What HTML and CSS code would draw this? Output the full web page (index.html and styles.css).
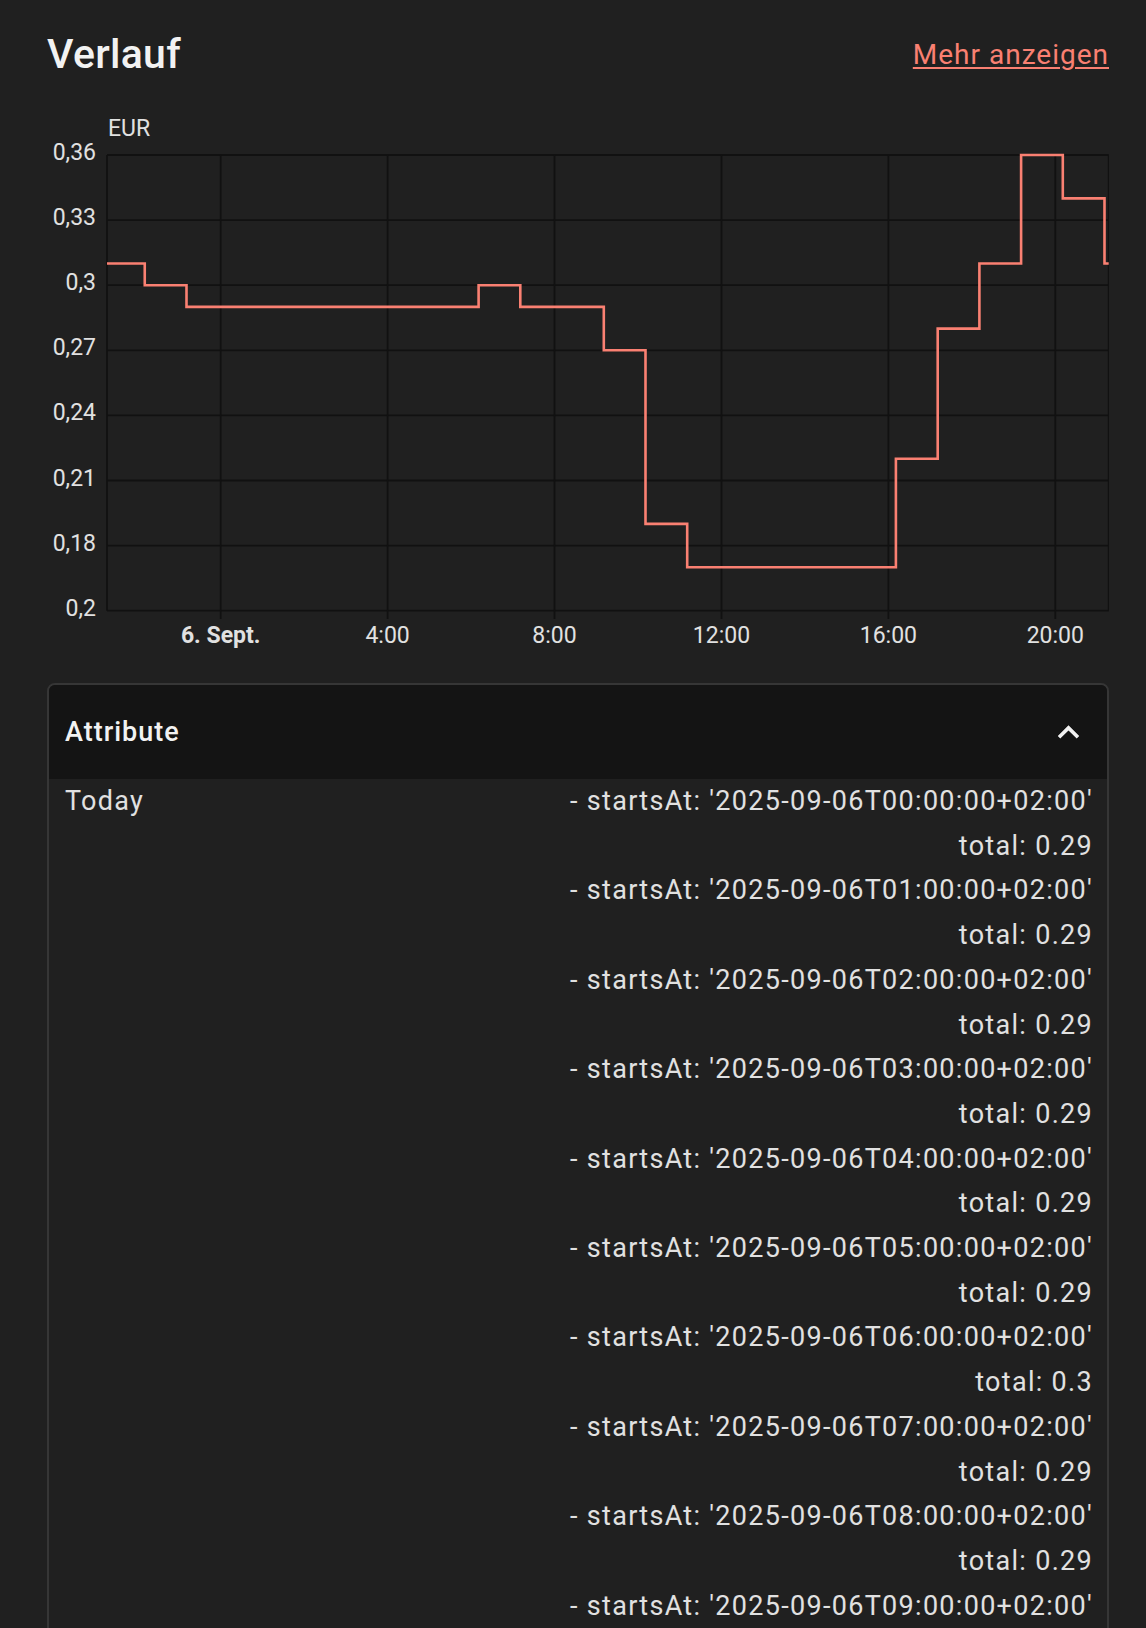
FILE: index.html
```html
<!DOCTYPE html>
<html lang="de">
<head>
<meta charset="utf-8">
<title>Verlauf</title>
<link rel="stylesheet" href="styles.css">
</head>
<body>
<div class="page">
  <div class="history-head">
    <h2 class="title">Verlauf</h2>
    <a class="more" href="#">Mehr anzeigen</a>
  </div>

  <svg class="chart" viewBox="47 100 1062 560" width="1062" height="560">
    <g class="grid">
      <line x1="107" y1="155" x2="1108.7" y2="155"/>
      <line x1="107" y1="220.1" x2="1108.7" y2="220.1"/>
      <line x1="107" y1="285.2" x2="1108.7" y2="285.2"/>
      <line x1="107" y1="350.3" x2="1108.7" y2="350.3"/>
      <line x1="107" y1="415.4" x2="1108.7" y2="415.4"/>
      <line x1="107" y1="480.5" x2="1108.7" y2="480.5"/>
      <line x1="107" y1="545.6" x2="1108.7" y2="545.6"/>
      <line x1="107" y1="610.7" x2="1108.7" y2="610.7"/>
      <line x1="107" y1="155" x2="107" y2="610.7"/>
      <line x1="1108.7" y1="155" x2="1108.7" y2="610.7"/>
      <line x1="220.7" y1="155" x2="220.7" y2="619"/>
      <line x1="387.6" y1="155" x2="387.6" y2="619"/>
      <line x1="554.5" y1="155" x2="554.5" y2="619"/>
      <line x1="721.5" y1="155" x2="721.5" y2="619"/>
      <line x1="888.4" y1="155" x2="888.4" y2="619"/>
      <line x1="1055.3" y1="155" x2="1055.3" y2="619"/>
    </g>
    <text class="unit" x="108" y="135.7">EUR</text>
    <g class="ylabels">
      <text x="96" y="160">0,36</text>
      <text x="96" y="225.1">0,33</text>
      <text x="96" y="290.2">0,3</text>
      <text x="96" y="355.3">0,27</text>
      <text x="96" y="420.4">0,24</text>
      <text x="96" y="485.5">0,21</text>
      <text x="96" y="550.6">0,18</text>
      <text x="96" y="615.7">0,2</text>
    </g>
    <g class="xlabels">
      <text class="day" x="220.7" y="643.3">6. Sept.</text>
      <text x="387.6" y="643.3">4:00</text>
      <text x="554.5" y="643.3">8:00</text>
      <text x="721.5" y="643.3">12:00</text>
      <text x="888.4" y="643.3">16:00</text>
      <text x="1055.3" y="643.3">20:00</text>
    </g>
    <path class="series" d="M107,263.5 H144.75 V285.2 H186.5 V306.9 H478.6 V285.2 H520.3 V306.9 H603.8 V350.3 H645.5 V523.9 H687.2 V567.3 H895.9 V458.8 H937.7 V328.6 H979.4 V263.5 H1021.1 V155 H1062.8 V198.4 H1104.5 V263.5 H1108.7"/>
  </svg>

  <div class="expansion">
    <div class="exp-header">
      <span class="exp-title">Attribute</span>
      <svg class="chev" viewBox="0 0 24 24" width="43" height="43"><path d="M7.41,15.41L12,10.83L16.59,15.41L18,14L12,8L6,14L7.41,15.41Z"/></svg>
    </div>
    <div class="attr-row">
      <div class="attr-name">Today</div>
      <div class="attr-value">
        <div>- startsAt: '2025-09-06T00:00:00+02:00'</div>
        <div>total: 0.29</div>
        <div>- startsAt: '2025-09-06T01:00:00+02:00'</div>
        <div>total: 0.29</div>
        <div>- startsAt: '2025-09-06T02:00:00+02:00'</div>
        <div>total: 0.29</div>
        <div>- startsAt: '2025-09-06T03:00:00+02:00'</div>
        <div>total: 0.29</div>
        <div>- startsAt: '2025-09-06T04:00:00+02:00'</div>
        <div>total: 0.29</div>
        <div>- startsAt: '2025-09-06T05:00:00+02:00'</div>
        <div>total: 0.29</div>
        <div>- startsAt: '2025-09-06T06:00:00+02:00'</div>
        <div>total: 0.3</div>
        <div>- startsAt: '2025-09-06T07:00:00+02:00'</div>
        <div>total: 0.29</div>
        <div>- startsAt: '2025-09-06T08:00:00+02:00'</div>
        <div>total: 0.29</div>
        <div>- startsAt: '2025-09-06T09:00:00+02:00'</div>
        <div>total: 0.27</div>
        <div>- startsAt: '2025-09-06T10:00:00+02:00'</div>
        <div>total: 0.19</div>
      </div>
    </div>
  </div>
</div>
</body>
</html>
```

FILE: styles.css
```css
html, body {
  margin: 0;
  padding: 0;
  background: #202020;
}

body {
  font-family: Roboto, "Noto Sans", Arial, sans-serif;
  color: #e1e1e1;
}

.page {
  box-sizing: border-box;
  height: 1628px;
  overflow: hidden;
  padding: 30px 37px 0 47px;
}

.history-head {
  display: flex;
  justify-content: space-between;
  align-items: center;
  height: 48px;
}

.title {
  margin: 0;
  font-size: 41px;
  font-weight: 500;
  line-height: 48px;
  letter-spacing: 0.3px;
  color: #f2f2f2;
}

.more {
  color: #fa8072;
  font-size: 28px;
  line-height: 33px;
  letter-spacing: 1px;
  text-decoration: underline;
  text-decoration-thickness: 2px;
  text-underline-offset: 3px;
}

.chart {
  display: block;
  margin-top: 22px;
  width: 1062px;
  height: 560px;
  font-family: Roboto, "Noto Sans", Arial, sans-serif;
}

.grid line {
  stroke: #111111;
  stroke-width: 1.8;
}

.unit {
  font-size: 23px;
  fill: #e1e1e1;
}

.ylabels text {
  font-size: 23px;
  fill: #e1e1e1;
  text-anchor: end;
}

.xlabels text {
  font-size: 23px;
  fill: #e1e1e1;
  text-anchor: middle;
}

.xlabels .day {
  font-weight: 700;
}

.series {
  fill: none;
  stroke: #fa8072;
  stroke-width: 2.6;
  stroke-linejoin: miter;
}

.expansion {
  margin-top: 23px;
  border: 2px solid #363636;
  border-radius: 8px;
  overflow: hidden;
}

.exp-header {
  height: 94px;
  background: #141414;
  display: flex;
  align-items: center;
  justify-content: space-between;
  padding: 0 17px 0 16px;
}

.exp-title {
  font-size: 27px;
  font-weight: 500;
  letter-spacing: 1px;
  color: #f2f2f2;
}

.chev {
  display: block;
  fill: #f2f2f2;
}

.attr-row {
  display: flex;
  justify-content: space-between;
  padding: 0 14px 0 16px;
  font-size: 27px;
  line-height: 44.7px;
  letter-spacing: 1.3px;
}

.attr-value {
  text-align: right;
}
```
